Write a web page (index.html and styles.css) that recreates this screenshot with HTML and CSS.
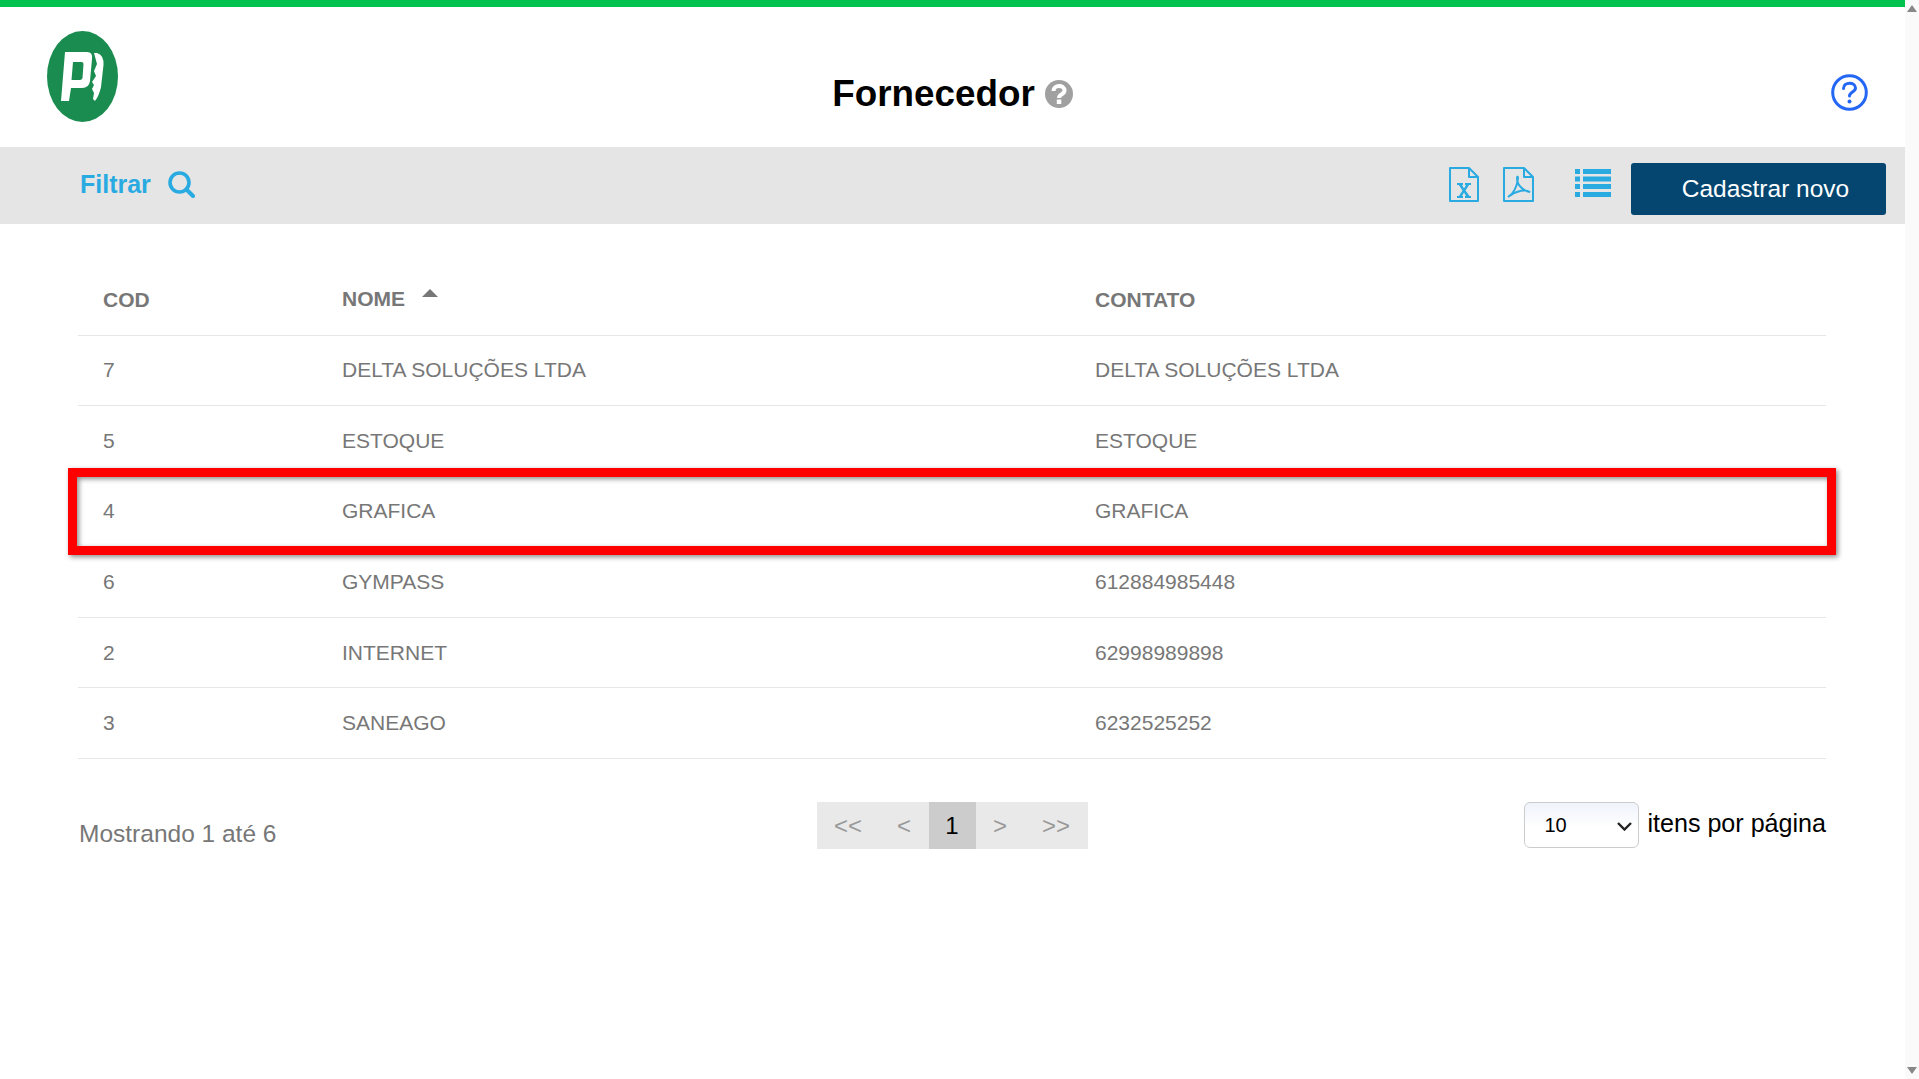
FILE: index.html
```html
<!DOCTYPE html>
<html lang="pt-BR">
<head>
<meta charset="utf-8">
<title>Fornecedor</title>
<link rel="stylesheet" href="styles.css">
</head>
<body>
<div class="page">
  <div class="topbar"></div>
  <header class="header">
    <svg class="logo" viewBox="0 0 71 91" aria-label="Logo">
      <ellipse cx="35.5" cy="45.500" rx="35.500" ry="45.500" fill="#1a8c50"/>
      <path fill="#fff" fill-rule="evenodd" d="M18 21 H40 Q46 21 45 28 L43 50 Q42 57 35 57 H24 L22 70 H14 Z M26 31 L24.500 49 H33 Q35 49 35.500 47 L36.500 33 Q36.500 31 34.500 31 Z"/>
      <path fill="#fff" d="M47 22 H50 Q57 24 56.500 34 L54 56 Q52 65 48 70 L46 68 L47 62 L45 58 L47 54 L45 51 L49 45 L47 40 L50 33 Z"/>
    </svg>
    <div class="title-wrap">
      <h1 class="title">Fornecedor</h1>
      <svg class="title-help" viewBox="0 0 28 28">
        <circle cx="14" cy="14" r="14" fill="#a0a0a0"/>
        <path fill="none" stroke="#fff" stroke-width="4" d="M8.500 11 C8.500 4.500 19.500 4.500 19.500 10.500 C19.500 14.500 14 14 14 18"/>
        <rect x="11.800" y="19.500" width="4.500" height="4.500" fill="#fff"/>
      </svg>
    </div>
    <svg class="help" viewBox="0 0 37 37">
      <circle cx="18.500" cy="18.500" r="16.800" fill="none" stroke="#2567f5" stroke-width="3"/>
      <path fill="none" stroke="#2567f5" stroke-width="3" stroke-linecap="round" d="M12.500 14.500 C12.500 7.500 24.500 7.500 24.500 14 C24.500 18 18.500 18 18.500 22"/>
      <circle cx="18.500" cy="27.500" r="2" fill="#2567f5"/>
    </svg>
  </header>

  <nav class="toolbar">
    <div class="filter">
      <span class="filter-label">Filtrar</span>
      <svg class="search" viewBox="0 0 27 27">
        <circle cx="11.500" cy="11.500" r="9.500" fill="none" stroke="#29abe2" stroke-width="3.600"/>
        <path stroke="#29abe2" stroke-width="4" stroke-linecap="round" d="M18.500 18.500 L25 25"/>
      </svg>
    </div>
    <div class="actions">
      <svg class="file-icon" viewBox="0 0 30 35">
        <path fill="none" stroke="#29abe2" stroke-width="2" stroke-linejoin="round" d="M1 1 H20 L29 10 V34 H1 Z M20 1 V10 H29"/>
        <path fill="#29abe2" d="M8 16 H14 V18 H13 L15 21.500 L17 18 H16 V16 H22 V18 H20 L16.500 23.500 L20.500 29 H22 V31 H16 V29 H17 L15 25.500 L13 29 H14 V31 H8 V29 H10 L13.500 23.500 L9.800 18 H8 Z"/>
      </svg>
      <svg class="file-icon pdf" viewBox="0 0 31 35">
        <path fill="none" stroke="#29abe2" stroke-width="2" stroke-linejoin="round" d="M1 1 H21 L30 10 V34 H1 Z M21 1 V10 H30"/>
        <path fill="none" stroke="#29abe2" stroke-width="2" d="M5 30 C10 27 14 20 15 11 C15 9 14 9 14 11 C14 18 20 24 27 25 C23 22 14 23 5 30 Z"/>
      </svg>
      <svg class="list-icon" viewBox="0 0 36 28">
        <path fill="#29abe2" d="M0 0h5v5H0zM8 0h28v5H8zM0 7.500h5v5H0zM8 7.500h28v5H8zM0 15h5v5H0zM8 15h28v5H8zM0 23h5v5H0zM8 23h28v5H8z"/>
      </svg>
      <button class="primary" type="button">Cadastrar novo</button>
    </div>
  </nav>

  <main class="content">
    <table class="grid">
      <thead>
        <tr>
          <th class="col-cod">COD</th>
          <th class="col-nome"><span class="sort-label">NOME</span><span class="sort-arrow"></span></th>
          <th>CONTATO</th>
        </tr>
      </thead>
      <tbody>
        <tr><td>7</td><td>DELTA SOLUÇÕES LTDA</td><td>DELTA SOLUÇÕES LTDA</td></tr>
        <tr><td>5</td><td>ESTOQUE</td><td>ESTOQUE</td></tr>
        <tr><td>4</td><td>GRAFICA</td><td>GRAFICA</td></tr>
        <tr><td>6</td><td>GYMPASS</td><td>612884985448</td></tr>
        <tr><td>2</td><td>INTERNET</td><td>62998989898</td></tr>
        <tr><td>3</td><td>SANEAGO</td><td>6232525252</td></tr>
      </tbody>
    </table>

    <div class="footer">
      <div class="count">Mostrando 1 até 6</div>
      <div class="pager">
        <span class="page-item">&lt;&lt;</span>
        <span class="page-item">&lt;</span>
        <span class="page-item active">1</span>
        <span class="page-item">&gt;</span>
        <span class="page-item">&gt;&gt;</span>
      </div>
      <div class="per-page">
        <div class="select-wrap">
          <select class="select"><option>10</option></select>
          <svg class="chevron" viewBox="0 0 15 9"><path fill="none" stroke="#222" stroke-width="2.400" d="M1 1 L7.500 7.500 L14 1"/></svg>
        </div>
        <span class="per-label">itens por página</span>
      </div>
    </div>
    <div class="highlight"></div>
  </main>
</div>
<aside class="scrollbar">
  <span class="arrow-up"></span>
  <span class="arrow-down"></span>
</aside>
</body>
</html>
```

FILE: styles.css
```css
* { box-sizing: border-box; }
html, body { height: 100%; }
body {
  margin: 0;
  display: flex;
  overflow: hidden;
  background: #fff;
  font-family: "Liberation Sans", Arial, sans-serif;
}
.page { width: 1905px; height: 1079px; display: flex; flex-direction: column; }
.topbar { height: 7px; background: #00c24e; }
.header {
  height: 140px;
  display: grid;
  grid-template-columns: 1fr auto 1fr;
  padding: 24px 37px 0 47px;
}
.logo { width: 71px; height: 91px; }
.title-wrap { display: flex; align-items: center; gap: 10px; height: 76px; margin: 25px 10px 0 0; }
.title { margin: 0; font-size: 36.800px; font-weight: 700; color: #000; line-height: 1; }
.title-help { width: 28px; height: 28px; }
.help { width: 37px; height: 37px; justify-self: end; margin-top: 43px; }

.toolbar {
  height: 77px;
  background: #e5e5e5;
  display: flex;
  justify-content: space-between;
  padding: 0 19px 0 80px;
}
.filter { display: flex; align-items: center; gap: 17px; height: 50px; margin-top: 12px; }
.filter-label { font-size: 25px; font-weight: 700; color: #29abe2; }
.search { width: 27px; height: 27px; }
.actions { display: flex; align-items: flex-start; }
.file-icon { width: 30px; height: 35px; margin-top: 20px; }
.file-icon.pdf { width: 31px; margin-left: 24px; }
.list-icon { width: 36px; height: 28px; margin: 22px 20px 0 41px; }
.primary {
  width: 255px;
  height: 52px;
  margin-top: 16px;
  padding: 0 36px 0 50px;
  border: 0;
  border-radius: 3px;
  background: #04466f;
  color: #fff;
  font: 24.500px "Liberation Sans", Arial, sans-serif;
  white-space: nowrap;
}

.content { position: relative; padding: 41px 79px 0 78px; }
.grid { width: 100%; border-collapse: collapse; table-layout: fixed; font-size: 21px; color: #777; }
.grid th, .grid td { padding: 0 0 0 25px; text-align: left; border-bottom: 1.500px solid #e3e7e9; }
.grid th { height: 70px; font-weight: 700; padding-top: 1px; }
.grid td { height: 70.600px; }
.col-cod { width: 239px; }
.col-nome { width: 753px; }
.sort-label { position: relative; top: -1px; }
.sort-arrow {
  display: inline-block;
  width: 0;
  height: 0;
  margin-left: 17px;
  vertical-align: 10px;
  border-left: 8px solid transparent;
  border-right: 8px solid transparent;
  border-bottom: 8px solid #777;
}

.footer { display: grid; grid-template-columns: 1fr auto 1fr; margin-top: 43px; }
.count { font-size: 24.500px; color: #777; padding: 18px 0 0 1px; }
.pager { display: flex; height: 47px; background: #e9e9e9; font-size: 24px; color: #999; }
.page-item { display: flex; align-items: center; justify-content: center; width: 49px; }
.page-item:first-child, .page-item:last-child { width: 63px; }
.page-item.active { width: 47px; background: #ccc; color: #000; }
.per-page { display: flex; justify-self: end; align-items: flex-start; gap: 8px; }
.select-wrap { position: relative; width: 115px; height: 46px; }
.select {
  appearance: none;
  width: 100%;
  height: 100%;
  padding: 0 0 0 19px;
  border: 1px solid #ccc;
  border-radius: 6px;
  background: linear-gradient(#eff3fb, #fff 55%);
  color: #000;
  font: 20px "Liberation Sans", Arial, sans-serif;
}
.chevron { position: absolute; right: 7px; top: 20px; width: 15px; height: 9px; pointer-events: none; }
.per-label { font-size: 25.100px; color: #000; line-height: 42px; }

.highlight {
  position: absolute;
  left: 68px;
  top: 244px;
  width: 1768px;
  height: 87px;
  border: 9px solid #f00;
  box-shadow: 2px 2px 5px rgba(0,0,0,.45), inset 2px 2px 5px rgba(0,0,0,.45);
}

.scrollbar {
  width: 14px;
  height: 1079px;
  background: #fafafa;
  display: flex;
  flex-direction: column;
  justify-content: space-between;
  align-items: center;
  padding: 5px 0 5px;
}
.arrow-up { width: 0; height: 0; border: 5px solid transparent; border-top: 0; border-bottom: 7px solid #888; }
.arrow-down { width: 0; height: 0; border: 5px solid transparent; border-bottom: 0; border-top: 7px solid #888; }
```
